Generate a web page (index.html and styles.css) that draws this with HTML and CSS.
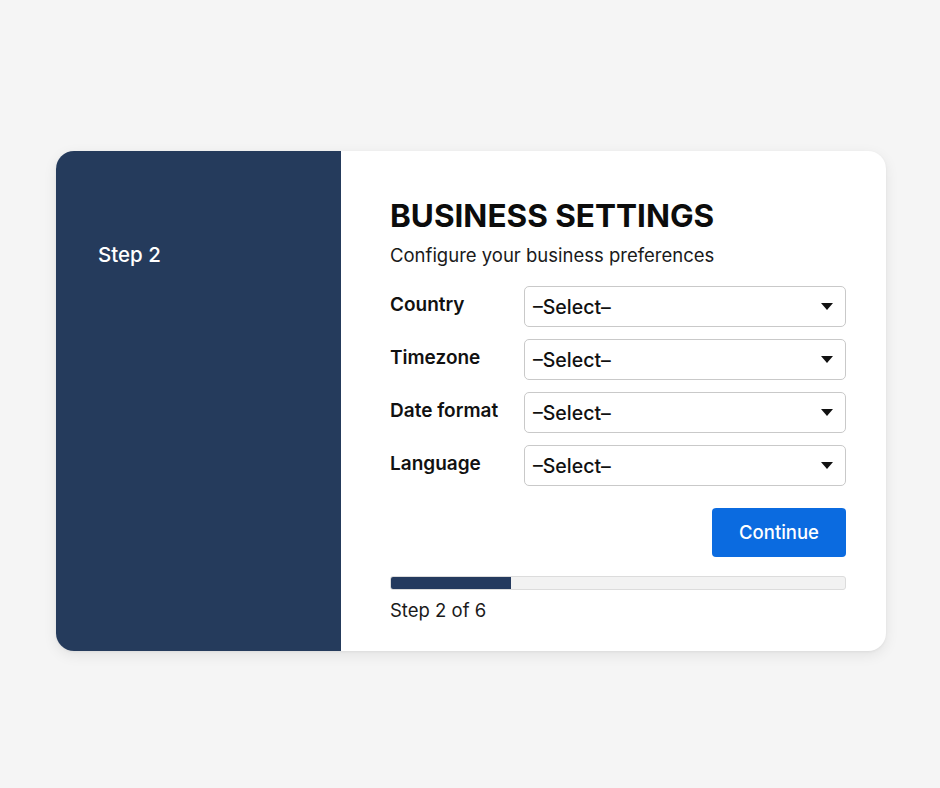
FILE: index.html
```html
<!DOCTYPE html>
<html lang="en">
<head>
<meta charset="utf-8">
<title>Business Settings</title>
<link rel="stylesheet" href="styles.css">
</head>
<body>
<div class="page">
  <div class="card">
    <aside class="side">
      <div class="side-step">Step 2</div>
    </aside>
    <main class="content">
      <h1 class="title">BUSINESS SETTINGS</h1>
      <p class="subtitle">Configure your business preferences</p>
      <div class="form">
        <div class="row">
          <label class="label">Country</label>
          <div class="select"><span>–Select–</span><svg class="caret" width="12" height="7" viewBox="0 0 12 7"><path d="M0 0H12L6 7Z" fill="#111"/></svg></div>
        </div>
        <div class="row">
          <label class="label">Timezone</label>
          <div class="select"><span>–Select–</span><svg class="caret" width="12" height="7" viewBox="0 0 12 7"><path d="M0 0H12L6 7Z" fill="#111"/></svg></div>
        </div>
        <div class="row">
          <label class="label">Date format</label>
          <div class="select"><span>–Select–</span><svg class="caret" width="12" height="7" viewBox="0 0 12 7"><path d="M0 0H12L6 7Z" fill="#111"/></svg></div>
        </div>
        <div class="row">
          <label class="label">Language</label>
          <div class="select"><span>–Select–</span><svg class="caret" width="12" height="7" viewBox="0 0 12 7"><path d="M0 0H12L6 7Z" fill="#111"/></svg></div>
        </div>
      </div>
      <div class="actions">
        <button class="btn">Continue</button>
      </div>
      <div class="progress"><div class="progress-fill" style="width:120px"></div></div>
      <div class="progress-text">Step 2 of 6</div>
    </main>
  </div>
</div>
</body>
</html>
```

FILE: styles.css
```css
* { box-sizing: border-box; }
html, body {
  margin: 0;
  padding: 0;
  background: #f5f5f5;
  font-family: Inter, "Noto Sans", "Liberation Sans", sans-serif;
  color: #111;
}
.page {
  width: 940px;
  height: 788px;
  padding: 151px 0 0 56px;
}
.card {
  width: 830px;
  height: 500px;
  display: flex;
  border-radius: 18px;
  overflow: hidden;
  background: #fff;
  box-shadow: 0 4px 14px rgba(0,0,0,0.08), 0 1px 3px rgba(0,0,0,0.05);
}
.side {
  width: 285px;
  flex: none;
  background: #253b5c;
  padding: 92px 0 0 42px;
}
.side-step {
  color: #fff;
  font-size: 20.5px;
  font-weight: 500;
  line-height: 24px;
}
.content {
  flex: 1;
  padding: 46px 40px 0 49px;
}
.title {
  margin: 0;
  font-size: 31.5px;
  line-height: 37px;
  font-weight: 700;
  color: #0c0c0c;
}
.subtitle {
  margin: 9px 0 0;
  font-size: 18.5px;
  line-height: 24px;
  color: #1a1a1a;
}
.form {
  margin-top: 19px;
  display: flex;
  flex-direction: column;
  gap: 12px;
}
.row {
  display: flex;
  align-items: center;
}
.label {
  width: 134px;
  flex: none;
  font-size: 19px;
  font-weight: 600;
  line-height: 24px;
  margin-top: -4px;
}
.select {
  flex: 1;
  height: 41px;
  border: 1px solid #c9c9c9;
  border-radius: 5px;
  display: flex;
  align-items: center;
  justify-content: space-between;
  padding: 0 12px 0 8px;
  font-size: 19.5px;
  font-weight: 500;
}
.caret { display: block; }
.actions {
  margin-top: 22px;
  display: flex;
  justify-content: flex-end;
}
.btn {
  width: 134px;
  height: 49px;
  border: 0;
  border-radius: 4px;
  background: #0b6be0;
  color: #fff;
  font-family: inherit;
  font-size: 18.5px;
  font-weight: 500;
  padding: 0 0 2px;
}
.progress {
  margin-top: 19px;
  height: 14px;
  background: #f2f2f2;
  border: 1px solid #dcdcdc;
  border-radius: 3px;
  overflow: hidden;
}
.progress-fill {
  height: 100%;
  background: #243a5e;
}
.progress-text {
  margin-top: 8px;
  font-size: 18.5px;
  line-height: 24px;
  color: #1a1a1a;
}
```
